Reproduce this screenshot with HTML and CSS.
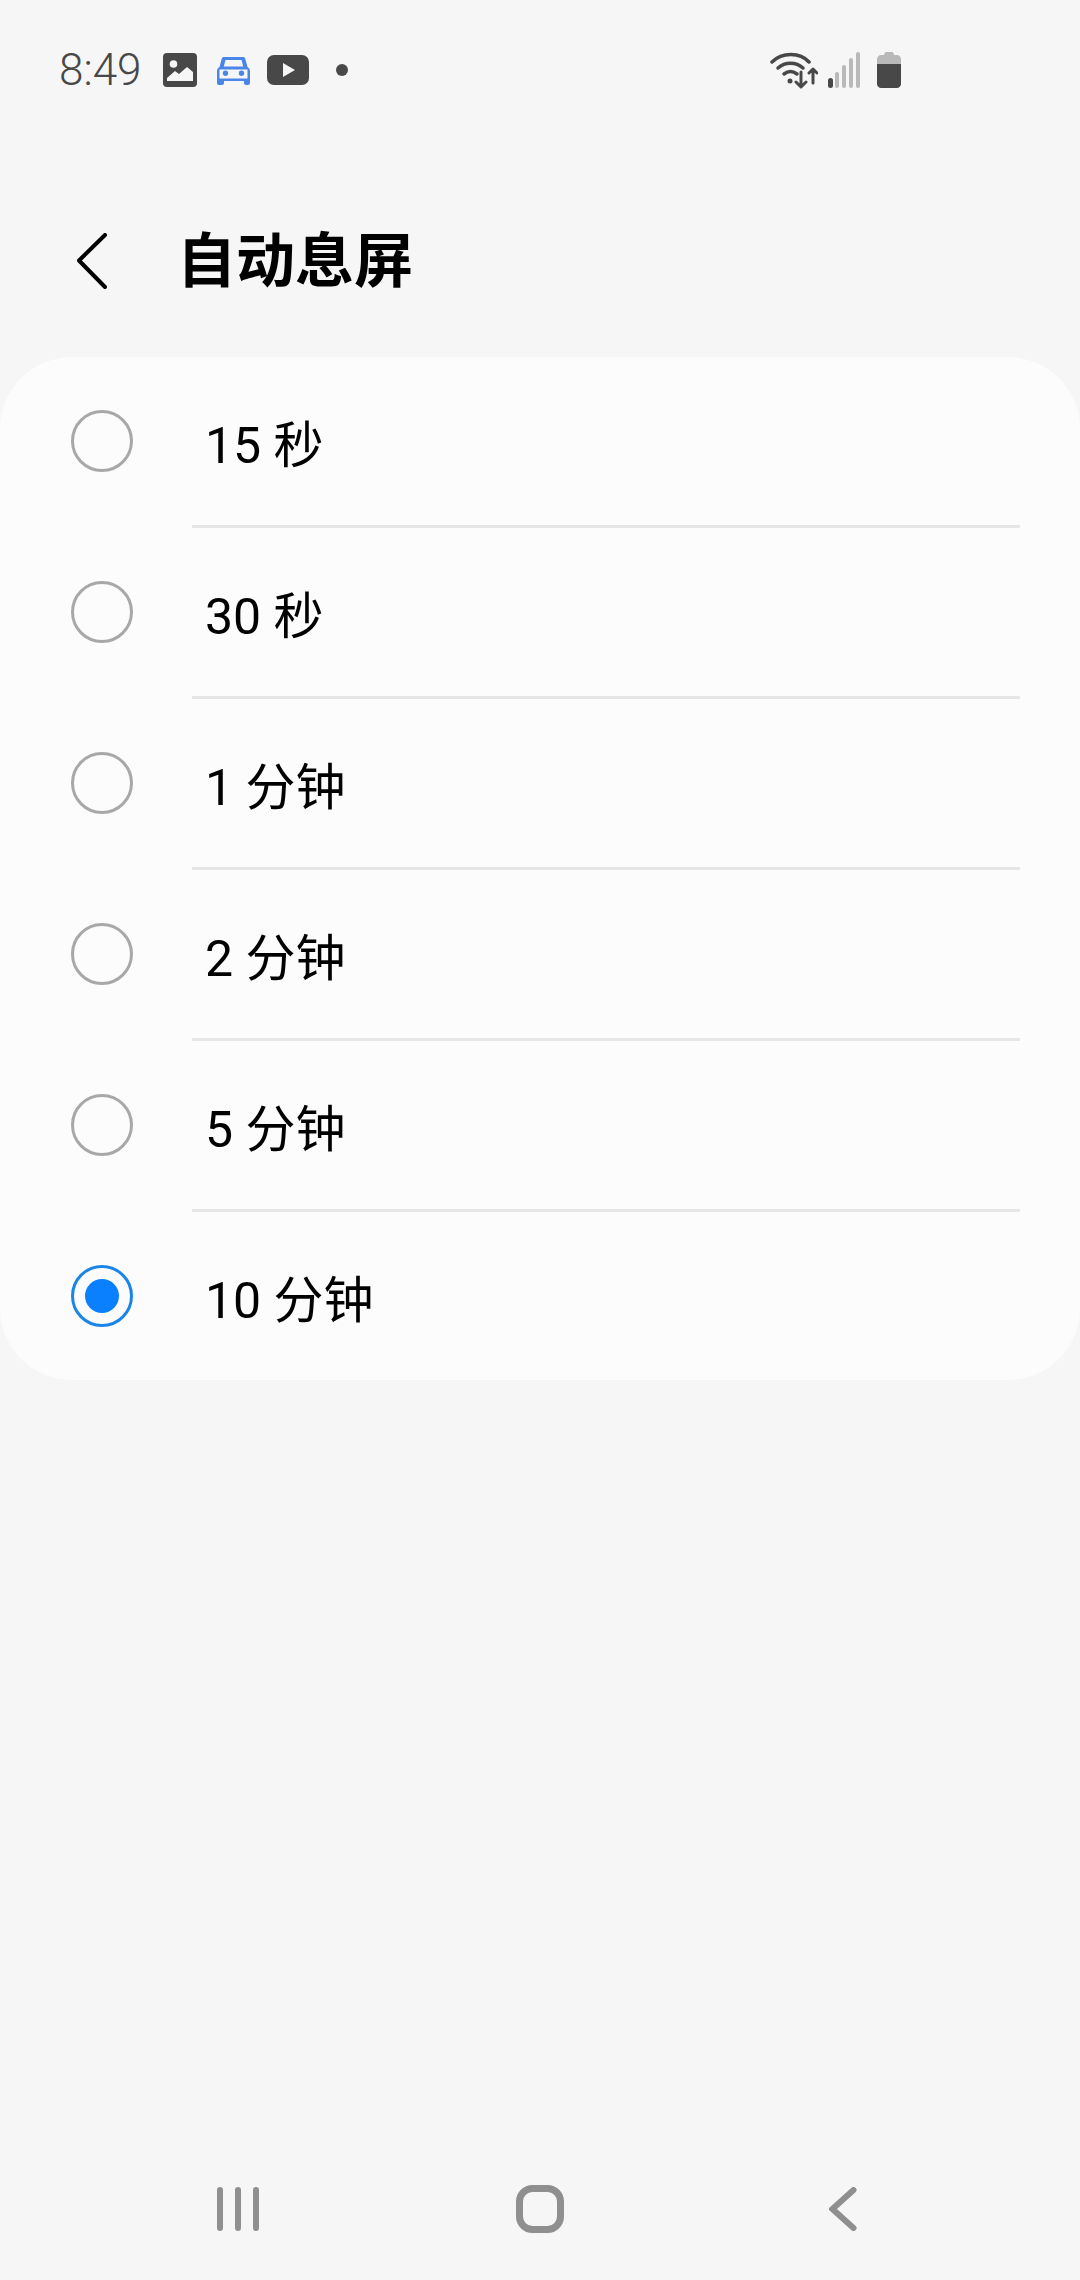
FILE: index.html
```html
<!DOCTYPE html>
<html lang="zh-CN">
<head>
<meta charset="utf-8">
<title>自动息屏</title>
<link rel="stylesheet" href="styles.css">
</head>
<body>
<div class="page">
  <div class="status">
    <span class="time">8:49</span>
    <svg class="ic-image" width="34" height="34" viewBox="0 0 34 34"><rect width="34" height="34" rx="4" fill="#484848"/><circle cx="10.500" cy="11" r="3.800" fill="#f6f6f6"/><path d="M4 28v-3l8-7 4 3 8-7 6 5v9z" fill="#f6f6f6"/></svg>
    <svg class="ic-car" width="33" height="29" viewBox="0 0 33 29"><path fill-rule="evenodd" d="M7 1h19c1 0 2 .7 2.300 1.700L30.500 11c1.500 1 2.500 2.500 2.500 4v12c0 1-.8 2-2 2h-2c-1 0-2-1-2-2v-2H7v2c0 1-1 2-2 2H2c-1.200 0-2-1-2-2V15c0-1.500 1-3 2.500-4l2.200-8.300C5 1.700 6 1 7 1zm1.500 3L6.800 10.500h19.400L24.500 4zM2.500 13.500H30.500V22.500H2.500zM8.500 14.500a2.700 2.700 0 1 0 0 5.400 2.700 2.700 0 0 0 0-5.400zm16 0a2.700 2.700 0 1 0 0 5.400 2.700 2.700 0 0 0 0-5.400z" fill="#4a86e8"/></svg>
    <svg class="ic-play" width="42" height="30" viewBox="0 0 42 30"><rect width="42" height="30" rx="7" fill="#484848"/><path d="M16 8l12 7-12 7z" fill="#f6f6f6"/></svg>
    <span class="dot"></span>
    <span class="status-right">
      <svg class="ic-wifi" width="48" height="38" viewBox="0 0 48 38"><g fill="none" stroke="#484848" stroke-width="3.500" stroke-linecap="round"><path d="M2 11C12 1 30 1 39 11"/><path d="M8 17c7-6.500 18-6.500 25 0"/><path d="M14 23c4-3 9-3 13 0"/></g><circle cx="20" cy="30" r="2.500" fill="#484848"/><g fill="none" stroke="#484848" stroke-width="3" stroke-linecap="round" stroke-linejoin="round"><path d="M31 21v14M26 31l5 5 5-5"/><path d="M43 32V18M39 22l4-4 4 4"/></g></svg>
      <svg class="ic-signal" width="32" height="36" viewBox="0 0 32 36"><g fill="#b9b9b9"><rect x="0" y="26" width="5" height="10" rx="2.500" fill="#484848"/><rect x="7" y="20" width="4" height="16" rx="2"/><rect x="14" y="13" width="4" height="23" rx="2"/><rect x="21" y="6" width="4" height="30" rx="2"/><rect x="28" y="0" width="4" height="36" rx="2"/></g></svg>
      <svg class="ic-battery" width="24" height="36" viewBox="0 0 24 36"><path d="M7 3c0-1.500 1-3 2-3h6c1 0 2 1.500 2 3h3c2 0 4 2 4 4v5H0V7c0-2 2-4 4-4z" fill="#b9b9b9"/><path d="M0 12h24v20c0 2-2 4-4 4H4c-2 0-4-2-4-4z" fill="#484848"/></svg>
    </span>
  </div>

  <header class="appbar">
    <svg class="back" width="30" height="56" viewBox="0 0 30 56"><path d="M28 2L2 27.500 28 54" fill="none" stroke="#000" stroke-width="4" stroke-linecap="round" stroke-linejoin="round"/></svg>
    <h1 class="title">自动息屏</h1>
  </header>

  <ul class="list">
    <li class="row"><span class="radio"></span><span class="label">15 秒</span></li>
    <li class="row"><span class="radio"></span><span class="label">30 秒</span></li>
    <li class="row"><span class="radio"></span><span class="label">1 分钟</span></li>
    <li class="row"><span class="radio"></span><span class="label">2 分钟</span></li>
    <li class="row"><span class="radio"></span><span class="label">5 分钟</span></li>
    <li class="row"><span class="radio radio-on"></span><span class="label">10 分钟</span></li>
  </ul>

  <nav class="navbar">
    <svg class="nav-recents" width="42" height="44" viewBox="0 0 42 44"><g fill="#8f8f8f"><rect x="0" y="0" width="6" height="44" rx="3"/><rect x="18" y="0" width="6" height="44" rx="3"/><rect x="36" y="0" width="6" height="44" rx="3"/></g></svg>
    <svg class="nav-home" width="48" height="48" viewBox="0 0 48 48"><rect x="3.500" y="3.500" width="41" height="41" rx="13" fill="none" stroke="#8f8f8f" stroke-width="7"/></svg>
    <svg class="nav-back" width="28" height="44" viewBox="0 0 28 44"><path d="M24.500 3L3.500 22l21 19" fill="none" stroke="#8f8f8f" stroke-width="6" stroke-linecap="round" stroke-linejoin="miter"/></svg>
  </nav>
</div>
</body>
</html>
```
FILE: styles.css
```css
* { box-sizing: border-box; }
html, body { margin: 0; padding: 0; }
body { background: #f6f6f6; font-family: Roboto, "Noto Sans CJK SC", sans-serif; }
.page { width: 1080px; height: 2280px; display: flex; flex-direction: column; background: #f6f6f6; }

.status { display: flex; align-items: center; height: 140px; padding: 0 0 0 59px; flex: none; }
.time { font-size: 44px; font-weight: 300; color: #484848; width: 104px; }
.ic-image { margin-right: 20px; }
.ic-car { margin-right: 17px; }
.ic-play { margin-right: 27px; }
.dot { width: 12px; height: 12px; border-radius: 50%; background: #484848; }
.status-right { display: flex; align-items: center; gap: 10px; margin-left: 422px; }
.ic-battery { margin-left: 7px; }

.appbar { display: flex; align-items: center; height: 217px; padding: 25px 0 0 77px; flex: none; }
.title { margin: 0 0 0 70px; font-size: 59px; font-weight: 700; color: #000; line-height: 1; }

.list { list-style: none; margin: 0; padding: 0; height: 1023px; background: #fcfcfc; border-radius: 72px; flex: none; }
.row { display: flex; align-items: center; height: 171px; padding: 0 0 3px 71px; position: relative; }
.row:last-child { height: 168px; padding-bottom: 0; }
.row:not(:last-child)::after { content: ""; position: absolute; left: 192px; right: 60px; bottom: 0; height: 3px; background: #e6e6e6; }
.radio { width: 62px; height: 62px; border-radius: 50%; border: 3px solid #a8a8a8; flex: none; display: flex; align-items: center; justify-content: center; }
.radio-on { border-color: #1a85e8; }
.radio-on::before { content: ""; width: 34px; height: 34px; border-radius: 50%; background: #0a80ff; }
.label { margin-left: 72px; font-size: 50px; color: #000; }

.navbar { margin-top: auto; display: flex; align-items: center; height: 48px; margin-bottom: 47px; padding-left: 217px; flex: none; }
.nav-home { margin-left: 257px; }
.nav-back { margin-left: 265px; }
```
